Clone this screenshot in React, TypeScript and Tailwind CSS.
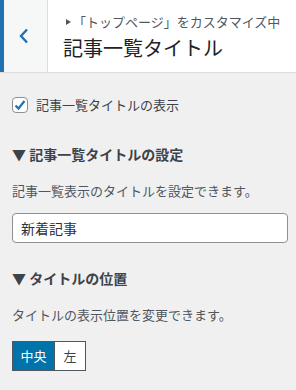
import React from "react";

export default function App() {
  const font = { fontFamily: '"Noto Sans CJK JP", "Noto Sans", sans-serif' };
  return (
    <div className="w-[296px] h-[390px] bg-[#f0f0f1] overflow-hidden" style={font}>
      <div className="flex h-[73px] bg-white border-b border-[#dcdcde]">
        <div className="w-[48px] h-full flex items-center justify-center bg-[#f6f7f7] border-l-4 border-l-[#2271b1] border-r border-r-[#dcdcde] pr-[4px]">
          <svg width="10" height="16" viewBox="0 0 10 16">
            <path d="M8 1.5 L2 8 L8 14.5" fill="none" stroke="#2271b1" strokeWidth="2.4" />
          </svg>
        </div>
        <div className="flex flex-col pl-[15px] pt-[12px]">
          <div className="flex items-center text-[13px] leading-[20px] text-[#50575e]">
            <svg width="5" height="6" viewBox="0 0 5 6" className="ml-[3px] mr-[2px]">
              <path d="M0 0 L5 3 L0 6 Z" fill="#50575e" />
            </svg>
            <span>「トップページ」をカスタマイズ中</span>
          </div>
          <div className="text-[20px] leading-[28px] text-[#1d2327] mt-[2px]">記事一覧タイトル</div>
        </div>
      </div>
      <div className="px-3">
        <label className="flex items-center mt-[24px] h-[16px]">
          <span className="w-[16px] h-[16px] rounded-[4px] border border-[#8c8f94] bg-white flex items-center justify-center">
            <svg width="14" height="14" viewBox="0 0 14 14">
              <path d="M2.5 7.5 L5.5 10.5 L11.5 3" fill="none" stroke="#2271b1" strokeWidth="2.2" />
            </svg>
          </span>
          <span className="ml-[8px] text-[13px] leading-[16px] text-[#3c434a]">記事一覧タイトルの表示</span>
        </label>
        <div className="mt-[32px] text-[14px] leading-[18px] font-bold text-[#3c434a]">▼ 記事一覧タイトルの設定</div>
        <div className="mt-[20px] text-[13px] leading-[16px] text-[#50575e]">記事一覧表示のタイトルを設定できます。</div>
        <div className="mt-[14px] h-[30px] w-[276px] rounded-[4px] border border-[#8c8f94] bg-white flex items-center px-[8px] text-[14px] text-[#2c3338]">
          新着記事
        </div>
        <div className="mt-[26px] text-[14px] leading-[18px] font-bold text-[#3c434a]">▼ タイトルの位置</div>
        <div className="mt-[20px] text-[13px] leading-[16px] text-[#50575e]">タイトルの表示位置を変更できます。</div>
        <div className="mt-[18px] flex w-fit border border-[#50575e] h-[30px]">
          <div className="w-[42px] bg-[#0073aa] text-white text-[13px] flex items-center justify-center border-r border-[#50575e]">中央</div>
          <div className="w-[30px] bg-white text-[#3c434a] text-[13px] flex items-center justify-center">左</div>
        </div>
      </div>
    </div>
  );
}
